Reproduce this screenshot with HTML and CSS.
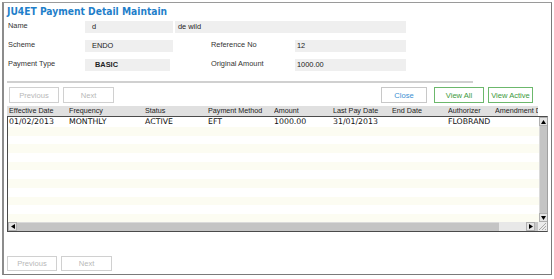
FILE: index.html
```html
<!doctype html>
<html lang="en">
<head>
    <meta charset="UTF-8">
    <title>JU4ET Payment Detail Maintain</title>
    <link rel="stylesheet" href="styles.css">
</head>
<body>
<div class="panel">
    <div class="title">JU4ET Payment Detail Maintain</div>

    <div class="form">
        <div class="form-row">
            <span class="label">Name</span>
            <span class="field f-short">d</span>
            <span class="field f-wide">de wild</span>
        </div>
        <div class="form-row">
            <span class="label">Scheme</span>
            <span class="field f-short">ENDO</span>
            <span class="label label-right">Reference No</span>
            <span class="field f-mid">12</span>
        </div>
        <div class="form-row">
            <span class="label">Payment Type</span>
            <span class="field f-short f-bold">BASIC</span>
            <span class="label label-right label-after-bold">Original Amount</span>
            <span class="field f-mid">1000.00</span>
        </div>
    </div>

    <div class="separator"></div>

    <div class="toolbar">
        <button class="btn btn-prev" disabled>Previous</button>
        <button class="btn btn-next" disabled>Next</button>
        <button class="btn btn-close">Close</button>
        <button class="btn btn-green btn-all">View All</button>
        <button class="btn btn-green btn-active">View Active</button>
    </div>

    <div class="grid">
        <div class="grid-head cols">
            <span>Effective Date</span>
            <span>Frequency</span>
            <span>Status</span>
            <span>Payment Method</span>
            <span>Amount</span>
            <span>Last Pay Date</span>
            <span>End Date</span>
            <span>Authorizer</span>
            <span>Amendment Date</span>
        </div>
        <div class="grid-body">
            <div class="grid-main">
                <div class="rows">
                    <div class="row cols">
                        <span>01/02/2013</span>
                        <span>MONTHLY</span>
                        <span>ACTIVE</span>
                        <span>EFT</span>
                        <span>1000.00</span>
                        <span>31/01/2013</span>
                        <span></span>
                        <span>FLOBRAND</span>
                        <span></span>
                    </div>
                    <div class="row"></div>
                    <div class="row"></div>
                    <div class="row"></div>
                    <div class="row"></div>
                    <div class="row"></div>
                    <div class="row"></div>
                    <div class="row"></div>
                    <div class="row"></div>
                    <div class="row"></div>
                    <div class="row"></div>
                    <div class="row"></div>
                </div>
                <div class="vscroll">
                    <div class="sb-btn">
                        <svg width="5" height="4" viewBox="0 0 5 4"><polygon points="2.5,0 5,4 0,4" fill="#000"/></svg>
                    </div>
                    <div class="vthumb"></div>
                    <div class="sb-btn">
                        <svg width="5" height="4" viewBox="0 0 5 4"><polygon points="0,0 5,0 2.5,4" fill="#000"/></svg>
                    </div>
                </div>
            </div>
            <div class="hscroll">
                <div class="sb-btn">
                    <svg width="4" height="5" viewBox="0 0 4 5"><polygon points="4,0 4,5 0,2.5" fill="#000"/></svg>
                </div>
                <div class="hthumb"></div>
                <div class="htrack"></div>
                <div class="sb-btn">
                    <svg width="4" height="5" viewBox="0 0 4 5"><polygon points="0,0 4,2.5 0,5" fill="#000"/></svg>
                </div>
                <div class="corner">
                    <svg width="9" height="9" viewBox="0 0 9 9"><path d="M1 8L8 1M4 8L8 4M7 8L8 7" stroke="#aaa" stroke-width="1"/></svg>
                </div>
            </div>
        </div>
    </div>

    <div class="toolbar toolbar-bottom">
        <button class="btn btn-prev" disabled>Previous</button>
        <button class="btn btn-next" disabled>Next</button>
    </div>
</div>
</body>
</html>
```

FILE: styles.css
```css
*, *::after, *::before {
    box-sizing: border-box;
    margin: 0;
    padding: 0;
}

body {
    margin: 0;
    background: #fff;
    font-family: "Liberation Sans", Arial, sans-serif;
    color: #333;
}

.panel {
    margin: 2px 0 0 2px;
    width: 550px;
    height: 273px;
    border-top: 1px solid #9a9a9a;
    border-left: 2px solid #8c8c8c;
    border-right: 1px solid #7a7a7a;
    border-bottom: 1px solid #7a7a7a;
}

.title {
    margin: 2px 0 0 3px;
    height: 14px;
    line-height: 14px;
    font-family: "DejaVu Sans Condensed", "Liberation Sans", sans-serif;
    font-weight: bold;
    font-size: 10.2px;
    color: #1f7fca;
}

.form {
    margin-top: 2px;
    padding-left: 4px;
    display: flex;
    flex-direction: column;
    gap: 7px;
}

.form-row {
    display: flex;
    align-items: flex-start;
    height: 12px;
}

.label {
    width: 77px;
    line-height: 9px;
    font-size: 7.4px;
    color: #333;
}

.label-right {
    margin-left: 38px;
    width: 84px;
}

.label-after-bold {
    margin-left: 41px;
}

.field {
    height: 12px;
    line-height: 12px;
    padding-left: 7px;
    background: #efefef;
    font-size: 7.4px;
    color: #222;
}

.f-short {
    width: 88px;
}

.f-wide {
    margin-left: 2px;
    width: 231px;
    padding-left: 3px;
}

.f-mid {
    width: 111px;
    padding-left: 2px;
}

.f-bold {
    width: 85px;
    padding-left: 10px;
    font-weight: bold;
}

.separator {
    margin: 10px 0 0 3px;
    width: 466px;
    height: 2px;
    background: #d0d0d0;
}

.toolbar {
    margin-top: 4px;
    padding: 0 18px 0 5px;
    display: flex;
    align-items: center;
}

.btn {
    height: 16px;
    background: #fff;
    border: 1px solid #c8c8c8;
    font-family: "Liberation Sans", Arial, sans-serif;
    font-size: 7.6px;
    color: #3a8fd2;
}

.btn:disabled {
    color: #b8b8b8;
    border-color: #d0d0d0;
}

.btn-prev {
    width: 50px;
}

.btn-next {
    margin-left: 4px;
    width: 51px;
}

.btn-close {
    margin-left: auto;
    width: 46px;
}

.btn-green {
    border-color: #6cb86c;
    color: #3c9a3c;
}

.btn-all {
    margin-left: 7px;
    width: 50px;
}

.btn-active {
    margin-left: 4px;
    width: 45px;
}

.grid {
    margin: 3px 0 0 3px;
    width: 541px;
}

.cols {
    display: grid;
    grid-template-columns: 60px 76px 63px 66px 59px 59px 56px 47px 44px;
    white-space: nowrap;
    overflow: hidden;
}

.grid-head {
    width: 531px;
    height: 10px;
    line-height: 10px;
    padding-left: 2px;
    background: #e0e0e0;
    font-size: 7.2px;
    color: #222;
}

.grid-head span {
    overflow: hidden;
}

.grid-body {
    height: 116px;
    border-top: 1px solid #4a4a4a;
    border-left: 1px solid #4a4a4a;
    border-bottom: 1px solid #4a4a4a;
    border-right: 1px solid #a0a0a0;
    display: flex;
    flex-direction: column;
}

.grid-main {
    flex: 1;
    display: flex;
    overflow: hidden;
}

.rows {
    flex: 1;
    display: flex;
    flex-direction: column;
}

.row {
    height: 8.7px;
    flex-shrink: 0;
}

.row:nth-child(even) {
    background: #fcfcf2;
}

.row.cols {
    height: 10px;
    line-height: 10px;
    padding-left: 1px;
    font-family: "DejaVu Sans", Verdana, sans-serif;
    font-size: 7.8px;
    color: #111;
    overflow: visible;
}

.vscroll {
    width: 9px;
    display: flex;
    flex-direction: column;
    background: #c6c6c6;
}

.sb-btn {
    width: 9px;
    height: 9px;
    flex-shrink: 0;
    display: flex;
    justify-content: center;
    align-items: center;
    background: #e4e4e4;
    border: 1px solid #b0b0b0;
}

.vthumb {
    flex: 1;
    background: #c4c4c4;
    border-left: 1px solid #dadada;
}

.hscroll {
    height: 9px;
    display: flex;
    background: #c6c6c6;
}

.hthumb {
    flex: 1;
    background: #c4c4c4;
    border-top: 1px solid #dadada;
}

.htrack {
    width: 27px;
    background: #e8e8e8;
}

.corner {
    margin-left: 3px;
    width: 9px;
    height: 9px;
    background: #ececec;
}

.corner svg {
    display: block;
}

.toolbar-bottom {
    margin-top: 24px;
    padding-left: 3px;
}

.toolbar-bottom .btn {
    height: 15px;
}
```
